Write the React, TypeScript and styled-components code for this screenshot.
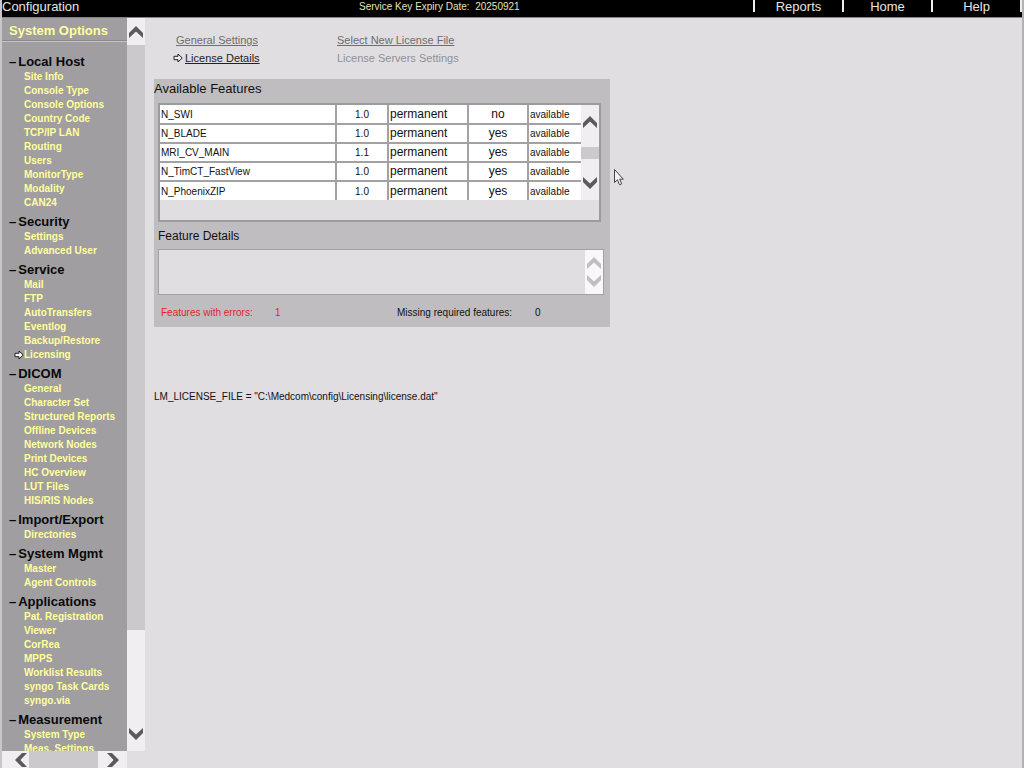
import React from "react";
import styled, { createGlobalStyle } from "styled-components";

const GlobalStyle = createGlobalStyle`
  * { box-sizing: border-box; }
  body {
    margin: 0;
    background: #e0dee1;
    color: #111;
    font-family: "Liberation Sans", Arial, sans-serif;
    font-size: 12px;
  }
  ul, h1, h2, p { margin: 0; padding: 0; }
  ul { list-style: none; }
`;

const Page = styled.div`
  display: flex;
  flex-direction: column;
  height: 100vh;
  border-left: 2px solid #c9c7ca;
  border-right: 2px solid #b3b1b5;
`;

const TopBar = styled.header`
  display: grid;
  grid-template-columns: 35% 1fr auto;
  flex: none;
  height: 18px;
  background: #000;
  border-bottom: 1px solid #858387;
  color: #e6e6e0;
  line-height: 14px;
`;

const AppTitle = styled.h1`
  font-size: 13px;
  font-weight: 400;
`;

const Expiry = styled.p`
  color: #e4e4bd;
  font-size: 10px;
  white-space: pre;
`;

const TopNav = styled.nav`
  display: flex;
  justify-content: flex-end;
  height: 12px;
  border-right: 2px solid #eee;
`;

const TopLink = styled.a`
  width: 89px;
  height: 12px;
  border-left: 2px solid #eee;
  color: #e6e6e0;
  font-size: 13px;
  text-align: center;
  text-decoration: none;
`;

const Body = styled.div`
  display: flex;
  flex: 1;
  min-height: 0;
`;

const Sidebar = styled.aside`
  display: grid;
  grid-template-columns: 125px 18px;
  grid-template-rows: minmax(0, 1fr) 17px;
  flex: none;
  background: #e0dee1;
`;

const SideContent = styled.div`
  overflow: hidden;
  background: #a09ea1;
`;

const SideTitle = styled.h2`
  height: 24px;
  padding-left: 7px;
  border-bottom: 1px solid #c4c2c5;
  box-shadow: inset 0 -1px #8b898c;
  color: #ffff9c;
  font-size: 13px;
  line-height: 26px;
`;

const SideNav = styled.nav`
  padding-top: 12px;
`;

const Group = styled.section`
  padding-bottom: 4px;
`;

const GroupButton = styled.button`
  display: flex;
  gap: 2px;
  padding: 0 0 0 7px;
  border: 0;
  background: none;
  color: #080808;
  font: bold 13px/16px "Liberation Sans", Arial, sans-serif;
`;

const SideItem = styled.li`
  display: flex;
  align-items: center;
  height: 14px;
  padding-left: 12px;
  white-space: nowrap;
`;

const Marker = styled.span`
  display: flex;
  flex: none;
  width: 10px;
`;

const SideLink = styled.a`
  color: #ffff9c;
  font-size: 10px;
  font-weight: 700;
  line-height: 14px;
  text-decoration: none;
`;

const ScrollBar = styled.div<{ $row?: boolean; $bg?: string }>`
  display: flex;
  flex-direction: ${(p) => (p.$row ? "row" : "column")};
  background: ${(p) => p.$bg || "#f0eef1"};
`;

const ScrollButton = styled.button<{ $size: number; $color?: string; $align?: string }>`
  display: flex;
  align-items: center;
  justify-content: ${(p) => p.$align || "center"};
  flex: 0 0 ${(p) => p.$size}px;
  padding: 0;
  border: 0;
  background: none;
  color: ${(p) => p.$color || "#5b595c"};
`;

const Track = styled.div`
  display: flex;
  flex-direction: column;
  flex: 1;
`;

const Thumb = styled.div<{ $grow: number }>`
  flex: ${(p) => p.$grow};
  background: #cbc9cc;
`;

const Gap = styled.div<{ $grow: number }>`
  flex: ${(p) => p.$grow};
`;

const Main = styled.main`
  flex: 1;
  min-width: 0;
  padding: 13px 9px;
`;

const Tabs = styled.nav`
  display: grid;
  grid-template-columns: 164px 1fr;
  padding-left: 19px;
`;

const TabCell = styled.div<{ $indent?: boolean }>`
  display: flex;
  align-items: center;
  height: 18px;
  padding-left: ${(p) => (p.$indent ? 3 : 0)}px;
`;

const TabMarker = styled.span`
  display: flex;
  flex: none;
  width: 12px;
`;

const TabLink = styled.a<{ $tone: string }>`
  color: ${(p) => p.$tone};
  font-size: 11px;
  text-underline-offset: 1px;
`;

const Disabled = styled.span`
  color: #929093;
  font-size: 11px;
`;

const Panel = styled.section`
  width: 456px;
  max-width: 100%;
  padding: 0 6px 5px 4px;
  margin-top: 12px;
  background: #bfbdc0;
`;

const PanelTitle = styled.h2`
  margin-left: -4px;
  font-size: 13px;
  font-weight: 400;
  line-height: 20px;
`;

const ListBox = styled.div`
  display: flex;
  align-items: flex-start;
  width: 443px;
  height: 119px;
  margin-top: 4px;
  border: 2px solid #9d9b9e;
  background: #e0dee1;
`;

const Table = styled.table`
  width: 421px;
  table-layout: fixed;
  border-collapse: collapse;
  background: #fff;
`;

const Cell = styled.td<{ $center?: boolean; $large?: boolean }>`
  height: 19px;
  padding: 0 0 0 ${(p) => (p.$center ? 0 : 1)}px;
  border-right: 2px solid #a3a1a4;
  border-bottom: 2px solid #a3a1a4;
  font-size: ${(p) => (p.$large ? 12 : 10)}px;
  line-height: 17px;
  text-align: ${(p) => (p.$center ? "center" : "left")};
  tr:last-child > & { border-bottom: 0; }
  &:last-child { border-right: 0; }
`;

const ListScroll = styled(ScrollBar)`
  flex: 1;
  height: 95px;
`;

const DetailsLabel = styled.label`
  display: block;
  padding: 5px 0 4px;
  font-size: 12px;
  line-height: 18px;
`;

const DetailsBox = styled.div`
  display: flex;
  height: 46px;
  border: 1px solid #a3a1a4;
  background: #e0dee1;
`;

const Details = styled.textarea`
  flex: 1;
  min-width: 0;
  padding: 2px;
  border: 0;
  outline: 0;
  resize: none;
  background: transparent;
  font: 12px "Liberation Sans", Arial, sans-serif;
`;

const DetailsScroll = styled(ScrollBar)`
  width: 18px;
  padding: 4px 0;
`;

const Summary = styled.div`
  display: grid;
  grid-template-columns: 114px 122px 138px 1fr;
  padding: 9px 0 0 3px;
  font-size: 10px;
  line-height: 18px;
`;

const Count = styled.span<{ $error?: boolean }>`
  color: ${(p) => (p.$error ? "#e0252b" : "#111")};
`;

const EnvLine = styled.p`
  margin-top: 60px;
  font-size: 10px;
  line-height: 20px;
`;

const Pointer = styled.svg`
  position: absolute;
  left: 613px;
  top: 168px;
`;

const groups: [string, string[]][] = [
  ["Local Host", ["Site Info", "Console Type", "Console Options", "Country Code", "TCP/IP LAN", "Routing", "Users", "MonitorType", "Modality", "CAN24"]],
  ["Security", ["Settings", "Advanced User"]],
  ["Service", ["Mail", "FTP", "AutoTransfers", "Eventlog", "Backup/Restore", "Licensing"]],
  ["DICOM", ["General", "Character Set", "Structured Reports", "Offline Devices", "Network Nodes", "Print Devices", "HC Overview", "LUT Files", "HIS/RIS Nodes"]],
  ["Import/Export", ["Directories"]],
  ["System Mgmt", ["Master", "Agent Controls"]],
  ["Applications", ["Pat. Registration", "Viewer", "CorRea", "MPPS", "Worklist Results", "syngo Task Cards", "syngo.via"]],
  ["Measurement", ["System Type", "Meas. Settings"]],
];

const features = [
  ["N_SWI", "1.0", "permanent", "no", "available"],
  ["N_BLADE", "1.0", "permanent", "yes", "available"],
  ["MRI_CV_MAIN", "1.1", "permanent", "yes", "available"],
  ["N_TimCT_FastView", "1.0", "permanent", "yes", "available"],
  ["N_PhoenixZIP", "1.0", "permanent", "yes", "available"],
];

const turns = { up: 0, right: 90, down: 180, left: 270 };

function Chevron({ dir }: { dir: keyof typeof turns }) {
  return (
    <svg width="16" height="16" viewBox="0 0 16 16" aria-hidden="true">
      <path d="M8 2 15 9v5L8 7.4 1 14V9z" fill="currentColor" transform={`rotate(${turns[dir]} 8 8)`} />
    </svg>
  );
}

function Arrow({ fill }: { fill: string }) {
  return (
    <svg width="10" height="10" viewBox="0 0 10 10" aria-hidden="true">
      <path d="M1 3.3h4V1l4.2 4L5 9V6.7H1z" fill={fill} stroke="#222" strokeWidth="1" />
    </svg>
  );
}

export default function App() {
  return (
    <>
      <GlobalStyle />
      <Page>
        <TopBar>
          <AppTitle>Configuration</AppTitle>
          <Expiry>{"Service Key Expiry Date:  20250921"}</Expiry>
          <TopNav>
            <TopLink href="#reports">Reports</TopLink>
            <TopLink href="#home">Home</TopLink>
            <TopLink href="#help">Help</TopLink>
          </TopNav>
        </TopBar>
        <Body>
          <Sidebar>
            <SideContent>
              <SideTitle>System Options</SideTitle>
              <SideNav>
                {groups.map(([name, items]) => (
                  <Group key={name}>
                    <GroupButton type="button">
                      <span>–</span>
                      <span>{name}</span>
                    </GroupButton>
                    <ul>
                      {items.map((item) => (
                        <SideItem key={item}>
                          <Marker>{item === "Licensing" && <Arrow fill="#fff" />}</Marker>
                          <SideLink href="#option">{item}</SideLink>
                        </SideItem>
                      ))}
                    </ul>
                  </Group>
                ))}
              </SideNav>
            </SideContent>
            <ScrollBar>
              <ScrollButton $size={27} aria-label="Scroll up"><Chevron dir="up" /></ScrollButton>
              <Track>
                <Thumb $grow={585} />
                <Gap $grow={87} />
              </Track>
              <ScrollButton $size={34} aria-label="Scroll down"><Chevron dir="down" /></ScrollButton>
            </ScrollBar>
            <ScrollBar $row>
              <ScrollButton $size={27} $align="flex-end" aria-label="Scroll left"><Chevron dir="left" /></ScrollButton>
              <Thumb $grow={1} />
              <ScrollButton $size={29} aria-label="Scroll right"><Chevron dir="right" /></ScrollButton>
            </ScrollBar>
          </Sidebar>
          <Main>
            <Tabs>
              <TabCell $indent><TabLink href="#general" $tone="#6e6c6f">General Settings</TabLink></TabCell>
              <TabCell><TabLink href="#select" $tone="#6e6c6f">Select New License File</TabLink></TabCell>
              <TabCell>
                <TabMarker><Arrow fill="#eee" /></TabMarker>
                <TabLink href="#details" $tone="#222">License Details</TabLink>
              </TabCell>
              <TabCell><Disabled>License Servers Settings</Disabled></TabCell>
            </Tabs>
            <Panel>
              <PanelTitle>Available Features</PanelTitle>
              <ListBox>
                <Table>
                  <colgroup>
                    <col width="176" />
                    <col width="52" />
                    <col width="80" />
                    <col width="60" />
                    <col width="53" />
                  </colgroup>
                  <tbody>
                    {features.map(([name, version, term, required, state]) => (
                      <tr key={name}>
                        <Cell>{name}</Cell>
                        <Cell $center>{version}</Cell>
                        <Cell $large>{term}</Cell>
                        <Cell $large $center>{required}</Cell>
                        <Cell>{state}</Cell>
                      </tr>
                    ))}
                  </tbody>
                </Table>
                <ListScroll>
                  <ScrollButton $size={34} aria-label="Scroll list up"><Chevron dir="up" /></ScrollButton>
                  <Track>
                    <Gap $grow={8} />
                    <Thumb $grow={12} />
                    <Gap $grow={7} />
                  </Track>
                  <ScrollButton $size={34} aria-label="Scroll list down"><Chevron dir="down" /></ScrollButton>
                </ListScroll>
              </ListBox>
              <DetailsLabel htmlFor="details">Feature Details</DetailsLabel>
              <DetailsBox>
                <Details id="details" readOnly />
                <DetailsScroll $bg="#f8f7f9">
                  <ScrollButton $size={18} $color="#c0bec1" aria-label="Scroll details up"><Chevron dir="up" /></ScrollButton>
                  <ScrollButton $size={18} $color="#c0bec1" aria-label="Scroll details down"><Chevron dir="down" /></ScrollButton>
                </DetailsScroll>
              </DetailsBox>
              <Summary>
                <Count $error>Features with errors:</Count>
                <Count $error>1</Count>
                <Count>Missing required features:</Count>
                <Count>0</Count>
              </Summary>
            </Panel>
            <EnvLine>{'LM_LICENSE_FILE = "C:\\Medcom\\config\\Licensing\\license.dat"'}</EnvLine>
          </Main>
        </Body>
      </Page>
      <Pointer width="12" height="19" viewBox="0 0 12 19" aria-hidden="true">
        <path d="M1.5 1.5v13l3-2.7 2 5 2.2-1-2-4.6h3.6z" fill="#f2f1f3" stroke="#444" />
      </Pointer>
    </>
  );
}
